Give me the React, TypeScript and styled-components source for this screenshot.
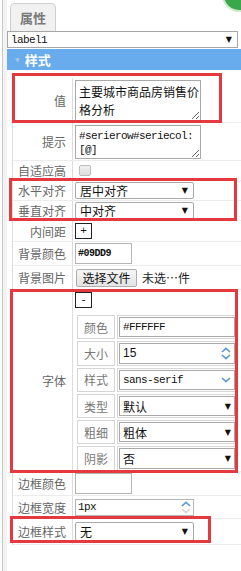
import React from 'react';
import styled, { createGlobalStyle } from 'styled-components';

const GlobalStyle = createGlobalStyle`
  html, body {
    margin: 0;
    padding: 0;
    background: #fff;
  }
  body {
    font-family: "Noto Sans CJK SC", "Liberation Sans", sans-serif;
    font-size: 12px;
    color: #222;
  }
`;

const CJK = `"Noto Sans CJK SC", "Liberation Sans", sans-serif`;
const MONO = `"Liberation Mono", "Noto Sans CJK SC", monospace`;

const Frame = styled.div`
  position: relative;
  width: 241px;
  height: 571px;
  overflow: hidden;
  display: flex;
  background: #fff;
`;

const Rail = styled.div`
  flex: none;
  width: 4px;
  margin-left: 2px;
  border-left: 1px solid #c9c9c9;
  background: #f3f3f3;
`;

const Main = styled.div`
  flex: 1;
  display: flex;
  flex-direction: column;
  min-width: 0;
`;

const TabBar = styled.div`
  height: 31px;
  display: flex;
  align-items: flex-end;
  padding-left: 3px;
`;

const Tab = styled.div`
  width: 46px;
  height: 28px;
  box-sizing: border-box;
  border: 1px solid #cfcfcf;
  border-bottom: none;
  border-radius: 5px 5px 0 0;
  background: #f1f1f1;
  color: #7a7a7a;
  font-weight: bold;
  font-size: 13px;
  display: flex;
  align-items: center;
  justify-content: center;
`;

const TargetSelect = styled.div`
  height: 17px;
  margin-right: 3px;
  box-sizing: border-box;
  border: 1px solid #a6a6a6;
  display: flex;
  align-items: center;
  justify-content: space-between;
  padding: 0 5px 0 3px;
  font-family: ${MONO};
  font-size: 11px;
  letter-spacing: -0.6px;
  color: #111;
`;

const Caret = styled.span`
  font-size: 8px;
  color: #111;
  letter-spacing: 0;
  font-family: "DejaVu Sans", sans-serif;
`;

const SectionHeader = styled.div`
  margin-top: 1px;
  height: 21px;
  background: #68aced;
  display: flex;
  align-items: center;
  padding-left: 8px;
  gap: 5px;
  color: #fff;
  font-weight: bold;
  font-size: 13px;
`;

const HeaderArrow = styled.span`
  font-size: 6px;
  color: #a9c6e6;
  font-family: "DejaVu Sans", sans-serif;
`;

const PropTable = styled.div`
  margin-top: 8px;
  margin-left: 5px;
  border-left: 1px solid #dcdcdc;
  display: flex;
  flex-direction: column;
`;

const Row = styled.div<{ $h: number }>`
  height: ${p => p.$h}px;
  box-sizing: border-box;
  display: flex;
  border-bottom: 1px solid #ececec;
`;

const Label = styled.div`
  flex: none;
  width: 60px;
  border-right: 1px solid #dcdcdc;
  display: flex;
  align-items: center;
  justify-content: flex-end;
  padding-right: 6px;
  box-sizing: border-box;
  color: #666;
  font-size: 12px;
  white-space: nowrap;
`;

const Value = styled.div<{ $column?: boolean }>`
  flex: 1;
  min-width: 0;
  display: flex;
  flex-direction: ${p => (p.$column ? 'column' : 'row')};
  align-items: ${p => (p.$column ? 'flex-start' : 'center')};
  padding-left: 2px;
  padding-top: ${p => (p.$column ? '2px' : '0')};
`;

const TextBox = styled.textarea<{ $mono?: boolean }>`
  width: 126px;
  height: ${p => (p.$mono ? 34 : 41)}px;
  box-sizing: border-box;
  border: 1px solid #a9a9a9;
  padding: ${p => (p.$mono ? '3px 4px 2px 3px' : '2px 0 2px 3px')};
  font-family: ${p => (p.$mono ? MONO : CJK)};
  font-size: ${p => (p.$mono ? 11 : 12)}px;
  letter-spacing: ${p => (p.$mono ? '-0.6px' : '0')};
  line-height: ${p => (p.$mono ? 14 : 18)}px;
  color: #111;
  overflow: hidden;
  outline: none;
  background: #fff;
`;

const Check = styled.span`
  margin-left: 4px;
  width: 12px;
  height: 11px;
  box-sizing: border-box;
  border: 1px solid #bdbdbd;
  border-radius: 2px;
  background: linear-gradient(#f0f0f0, #dcdcdc);
`;

const Select = styled.div<{ $w?: number; $h?: number }>`
  width: ${p => (p.$w ? `${p.$w}px` : '100%')};
  height: ${p => p.$h ?? 17}px;
  box-sizing: border-box;
  border: 1px solid #a9a9a9;
  border-radius: 2px;
  background: #fff;
  display: flex;
  align-items: center;
  justify-content: space-between;
  padding: 0 5px 0 4px;
  font-size: 12px;
  color: #111;
`;

const MiniButton = styled.div`
  width: 17px;
  height: 16px;
  box-sizing: border-box;
  border: 1px solid #222;
  background: #fff;
  display: flex;
  align-items: center;
  justify-content: center;
  font-family: ${MONO};
  font-size: 11px;
  color: #111;
`;

const ColorBox = styled.div<{ $bold?: boolean }>`
  width: 57px;
  height: 21px;
  box-sizing: border-box;
  border: 1px solid #b5b5b5;
  padding-left: 2px;
  display: flex;
  align-items: center;
  font-family: ${MONO};
  font-size: 10px;
  font-weight: ${p => (p.$bold ? 'bold' : 'normal')};
  letter-spacing: -0.5px;
  color: #111;
`;

const FileButton = styled.div`
  margin-left: 1px;
  width: 61px;
  height: 18px;
  box-sizing: border-box;
  border: 1px solid #adadad;
  border-radius: 2px;
  background: linear-gradient(#f5f5f5, #e4e4e4);
  display: flex;
  align-items: center;
  justify-content: center;
  font-size: 12px;
  color: #111;
`;

const FileName = styled.span`
  margin-left: 5px;
  font-size: 12px;
  color: #222;
  white-space: nowrap;
`;

const FontTable = styled.div`
  margin-top: 7px;
  margin-left: 2px;
  width: 159px;
  display: grid;
  grid-template-columns: 38px 1fr;
  grid-auto-rows: 24.3px;
  gap: 2px;
`;

const FontLabel = styled.div`
  border: 1px solid #d6d6d6;
  display: flex;
  align-items: center;
  justify-content: center;
  color: #777;
  font-size: 12px;
  white-space: nowrap;
  overflow: hidden;
`;

const FontCell = styled.div`
  border: 1px solid #d6d6d6;
  padding: 1px 0 1px 1px;
  display: flex;
  min-width: 0;
`;

const Field = styled.div<{ $mono?: boolean; $sans?: boolean }>`
  flex: 1;
  box-sizing: border-box;
  border: 1px solid #a9a9a9;
  background: #fff;
  display: flex;
  align-items: center;
  justify-content: space-between;
  padding: 0 3px 0 3px;
  font-family: ${p => (p.$mono ? MONO : p.$sans ? `"Liberation Sans", sans-serif` : CJK)};
  font-size: ${p => (p.$mono ? 11 : 12)}px;
  letter-spacing: ${p => (p.$mono ? '-0.6px' : '0')};
  color: #111;
`;

const NumberBox = styled.div`
  width: 119px;
  height: 17px;
  box-sizing: border-box;
  border: 1px solid #b5b5b5;
  display: flex;
  align-items: center;
  justify-content: space-between;
  padding: 0 2px 0 2px;
  font-family: ${MONO};
  font-size: 11px;
  letter-spacing: -0.6px;
  color: #111;
  overflow: hidden;
`;

const Spinner = styled.span`
  display: flex;
  flex-direction: column;
  gap: 1px;
`;

// red annotation frames drawn over the panel
const Mark = styled.div`
  position: absolute;
  box-sizing: border-box;
  border: 3px solid #e5393f;
  pointer-events: none;
`;

const Badge = styled.div`
  position: absolute;
  left: 222px;
  top: -22px;
  width: 34px;
  height: 34px;
  box-sizing: border-box;
  border-radius: 50%;
  background: #38a84a;
  border: 2px solid #cde8cf;
`;

const Up = ({ color = '#5b9bd5' }: { color?: string }) => (
  <svg width="10" height="6" viewBox="0 0 10 6">
    <polyline points="1,5 5,1.3 9,5" fill="none" stroke={color} strokeWidth="1.6" />
  </svg>
);

const Down = ({ color = '#5b9bd5' }: { color?: string }) => (
  <svg width="10" height="6" viewBox="0 0 10 6">
    <polyline points="1,1 5,4.7 9,1" fill="none" stroke={color} strokeWidth="1.6" />
  </svg>
);

const fontRows: { label: string; value: string; kind: 'text' | 'number' | 'list' | 'select'; mono?: boolean; sans?: boolean }[] = [
  { label: '颜色', value: '#FFFFFF', kind: 'text', mono: true },
  { label: '大小', value: '15', kind: 'number', sans: true },
  { label: '样式', value: 'sans-serif', kind: 'list', mono: true },
  { label: '类型', value: '默认', kind: 'select' },
  { label: '粗细', value: '粗体', kind: 'select' },
  { label: '阴影', value: '否', kind: 'select' },
];

const App: React.FC = () => {
  return (
    <Frame>
      <GlobalStyle />
      <Rail />
      <Main>
        <TabBar>
          <Tab>属性</Tab>
        </TabBar>
        <TargetSelect>
          <span>label1</span>
          <Caret>▼</Caret>
        </TargetSelect>
        <SectionHeader>
          <HeaderArrow>▼</HeaderArrow>
          <span>样式</span>
        </SectionHeader>

        <PropTable>
          <Row $h={45}>
            <Label>值</Label>
            <Value>
              <TextBox readOnly defaultValue="主要城市商品房销售价格分析" />
            </Value>
          </Row>
          <Row $h={38}>
            <Label>提示</Label>
            <Value>
              <TextBox $mono readOnly defaultValue="#serierow#seriecol:[@]" />
            </Value>
          </Row>
          <Row $h={20}>
            <Label>自适应高</Label>
            <Value>
              <Check />
            </Value>
          </Row>
          <Row $h={20}>
            <Label>水平对齐</Label>
            <Value>
              <Select $w={119}>
                <span>居中对齐</span>
                <Caret>▼</Caret>
              </Select>
            </Value>
          </Row>
          <Row $h={20}>
            <Label>垂直对齐</Label>
            <Value>
              <Select $w={119}>
                <span>中对齐</span>
                <Caret>▼</Caret>
              </Select>
            </Value>
          </Row>
          <Row $h={21}>
            <Label>内间距</Label>
            <Value>
              <MiniButton>+</MiniButton>
            </Value>
          </Row>
          <Row $h={24}>
            <Label>背景颜色</Label>
            <Value>
              <ColorBox $bold>#09DD9</ColorBox>
            </Value>
          </Row>
          <Row $h={24}>
            <Label>背景图片</Label>
            <Value>
              <FileButton>选择文件</FileButton>
              <FileName>未选…件</FileName>
            </Value>
          </Row>
          <Row $h={182}>
            <Label>字体</Label>
            <Value $column>
              <MiniButton>-</MiniButton>
              <FontTable>
                {fontRows.map(r => (
                  <React.Fragment key={r.label}>
                    <FontLabel>{r.label}</FontLabel>
                    <FontCell>
                      <Field $mono={r.mono} $sans={r.sans}>
                        <span>{r.value}</span>
                        {r.kind === 'number' && (
                          <Spinner>
                            <Up />
                            <Down />
                          </Spinner>
                        )}
                        {r.kind === 'list' && <Down />}
                        {r.kind === 'select' && <Caret>▼</Caret>}
                      </Field>
                    </FontCell>
                  </React.Fragment>
                ))}
              </FontTable>
            </Value>
          </Row>
          <Row $h={24}>
            <Label>边框颜色</Label>
            <Value>
              <ColorBox />
            </Value>
          </Row>
          <Row $h={23}>
            <Label>边框宽度</Label>
            <Value>
              <NumberBox>
                <span>1px</span>
                <Spinner>
                  <Up />
                  <Down color="#d6d6d6" />
                </Spinner>
              </NumberBox>
            </Value>
          </Row>
          <Row $h={26}>
            <Label>边框样式</Label>
            <Value>
              <Select $w={119} $h={19}>
                <span>无</span>
                <Caret>▼</Caret>
              </Select>
            </Value>
          </Row>
        </PropTable>
      </Main>

      <Badge />
      <Mark style={{ left: 12, top: 73, width: 210, height: 50 }} />
      <Mark style={{ left: 9, top: 178, width: 228, height: 43 }} />
      <Mark style={{ left: 10, top: 289, width: 228, height: 184 }} />
      <Mark style={{ left: 10, top: 516, width: 201, height: 27 }} />
    </Frame>
  );
};

export default App;
